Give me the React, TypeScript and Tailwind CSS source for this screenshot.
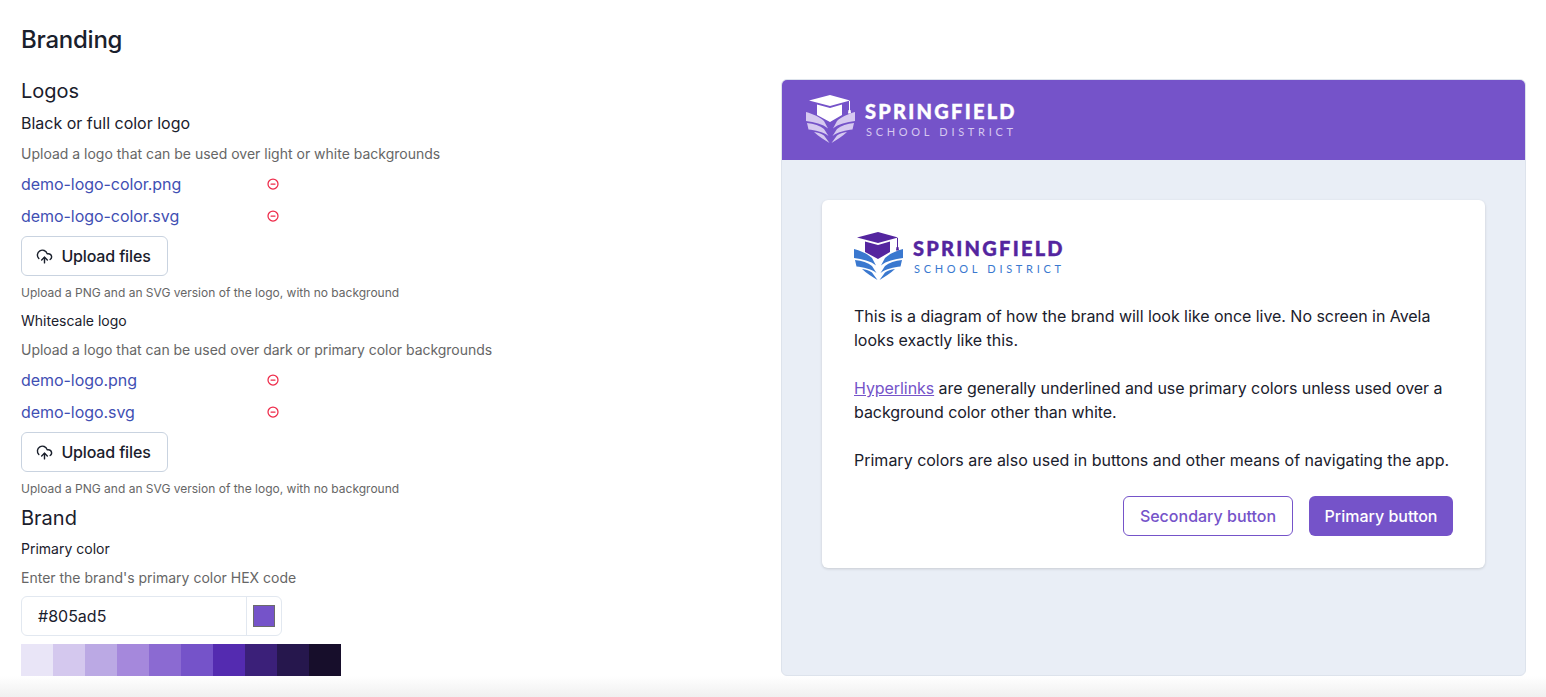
import React from 'react';
import { CircleMinus, CloudUpload } from 'lucide-react';

const swatches = ['#e9e5f7', '#d4c8ee', '#bba9e4', '#a588dc', '#8b6ad2', '#7553c9', '#542bb0', '#3b2079', '#26174d', '#170e2b'];

const SchoolLogo = ({ cap, wing, name, sub }: { cap: string; wing: string; name: string; sub: string }) => (
  <div className="flex items-start">
    <svg width="50" height="48" viewBox="0 0 50 48" className="shrink-0">
      <path d="M3 5.500 24 0l20 5.500-20 5.500z" fill={cap} />
      <path d="M11 9.500 24 13l12-3.500V20l-12 7-13-7z" fill={cap} />
      <path d="M43.500 6v9" stroke={cap} strokeWidth="1" fill="none" />
      <path d="M42.500 15h2l.5 3.500h-3z" fill={cap} />
      <path d="M0 17c7 2 14 5 18 9l4 7.500C17 29 8 27 0 26z" fill={wing} />
      <path d="M1 28c7 .5 13 2.500 17 6l4.500 7C17 37 9 35 2.500 34.500z" fill={wing} />
      <path d="M8 37c4 .5 7.500 1.500 10 3.500l5.500 7.500C18 44.500 13 41.500 8 37z" fill={wing} />
      <path d="M49 17c-7 2-14 5-18 9l-4 7.500C32 29 41 27 49 26z" fill={wing} />
      <path d="M48 28c-7 .5-13 2.500-17 6l-4.500 7C32 37 40 35 46.500 34.500z" fill={wing} />
      <path d="M41 37c-4 .5-7.500 1.500-10 3.500L25.500 48C31 44.500 36 41.500 41 37z" fill={wing} />
    </svg>
    <div className="ml-[9px] flex flex-col font-['Lato',sans-serif]">
      <span
        className="mt-[5px] text-[20px] leading-[22px] font-black tracking-[2.25px] whitespace-nowrap [-webkit-text-stroke:0.4px_currentColor]"
        style={{ color: name }}
      >
        SPRINGFIELD
      </span>
      <span className="ml-[1px] mt-[3px] text-[11px] leading-[14px] tracking-[3.7px] whitespace-nowrap" style={{ color: sub }}>
        SCHOOL DISTRICT
      </span>
    </div>
  </div>
);

const FileRow = ({ name }: { name: string }) => (
  <div className="flex h-6 items-center">
    <a className="w-[246px] text-base tracking-[-0.05px] text-[#3f4fb3]">{name}</a>
    <CircleMinus size={12} strokeWidth={2.5} className="text-[#ee2b4a]" />
  </div>
);

const UploadButton = () => (
  <button className="mt-2 flex h-10 w-[147px] items-center justify-center gap-2 rounded-md border border-[#c9d3e0] bg-white pr-0.5 text-base font-medium tracking-[-0.15px] text-[#1a202c]">
    <CloudUpload size={17} strokeWidth={2} />
    Upload files
  </button>
);

export default function App() {
  return (
    <div className="relative h-[697px] overflow-hidden bg-white pl-[21px] pr-5 pt-6 font-['Inter',sans-serif] text-[#1a202c]">
      <h1 className="text-2xl font-medium tracking-[-0.25px]">Branding</h1>

      <div className="flex justify-between">
        <div>
          <h2 className="mt-[21px] text-xl leading-7">Logos</h2>
          <h3 className="mt-1.5 text-base">Black or full color logo</h3>
          <p className="mt-[9px] text-sm text-[#666]">Upload a logo that can be used over light or white backgrounds</p>
          <div className="mt-2 flex flex-col gap-2">
            <FileRow name="demo-logo-color.png" />
            <FileRow name="demo-logo-color.svg" />
          </div>
          <UploadButton />
          <p className="mt-[9px] text-xs text-[#666]">Upload a PNG and an SVG version of the logo, with no background</p>

          <h3 className="mt-2.5 text-sm">Whitescale logo</h3>
          <p className="mt-[9px] text-sm tracking-[-0.03px] text-[#666]">Upload a logo that can be used over dark or primary color backgrounds</p>
          <div className="mt-2 flex flex-col gap-2">
            <FileRow name="demo-logo.png" />
            <FileRow name="demo-logo.svg" />
          </div>
          <UploadButton />
          <p className="mt-[9px] text-xs text-[#666]">Upload a PNG and an SVG version of the logo, with no background</p>

          <h2 className="mt-[7px] text-xl leading-7">Brand</h2>
          <h3 className="mt-[7px] text-sm">Primary color</h3>
          <p className="mt-[9px] text-sm text-[#666]">Enter the brand's primary color HEX code</p>
          <div className="mt-2 flex h-10 w-[261px] items-center rounded-md border border-[#e2e8f0]">
            <span className="flex-1 pl-4 text-base">#805ad5</span>
            <div className="flex h-full w-[35px] items-center justify-center border-l border-[#e2e8f0]">
              <div className="h-[22px] w-[22px] border border-[#6b6b6b] bg-[#7553c9]" />
            </div>
          </div>
          <div className="mt-2 flex">
            {swatches.map((c) => (
              <div key={c} className="h-8 w-8" style={{ backgroundColor: c }} />
            ))}
          </div>
        </div>

        <div className="mt-[23px] flex h-[597px] w-[745px] flex-col overflow-hidden rounded-md border border-[#dde3ec] bg-[#e9eef6]">
          <div className="flex h-20 shrink-0 items-start bg-[#7553c9] pl-6 pt-[15px]">
            <SchoolLogo cap="#ffffff" wing="#d6c9f0" name="#ffffff" sub="#d6c9f0" />
          </div>
          <div className="mx-10 mt-10 rounded-md bg-white p-8 shadow-[0_1px_3px_rgba(0,0,0,0.15)]">
            <SchoolLogo cap="#54259f" wing="#3a78cf" name="#54259f" sub="#3a78cf" />
            <p className="mt-6 text-base tracking-[-0.04px]">
              This is a diagram of how the brand will look like once live. No screen in Avela looks exactly like this.
            </p>
            <p className="mt-6 text-base tracking-[-0.065px]">
              <a className="text-[#7553c9] underline">Hyperlinks</a> are generally underlined and use primary colors unless used over a background color other than white.
            </p>
            <p className="mt-6 text-base">Primary colors are also used in buttons and other means of navigating the app.</p>
            <div className="mt-6 flex justify-end gap-4">
              <button className="h-10 w-[170px] rounded-md border border-[#7553c9] bg-white text-base font-medium text-[#7553c9]">Secondary button</button>
              <button className="h-10 w-[144px] rounded-md bg-[#7553c9] text-base font-medium text-white">Primary button</button>
            </div>
          </div>
        </div>
      </div>

      {/* bottom fade of the scroll area */}
      <div className="pointer-events-none absolute inset-x-0 bottom-0 h-[21px] bg-gradient-to-b from-white/0 to-[#f0f0f0]" />
    </div>
  );
}
